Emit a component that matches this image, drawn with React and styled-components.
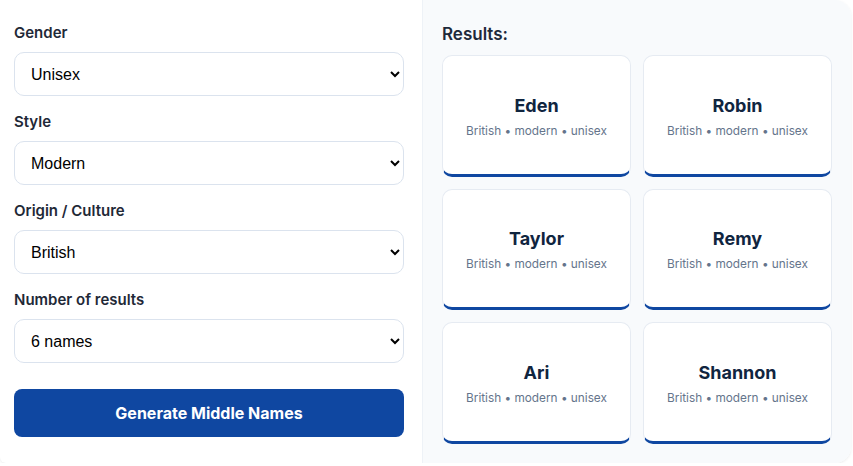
import React from "react";
import styled, { createGlobalStyle } from "styled-components";

const GlobalStyle = createGlobalStyle`
  body {
    margin: 0;
    background: #ffffff;
    font-family: Inter, "Noto Sans", sans-serif;
  }
`;

const Card = styled.div`
  display: grid;
  grid-template-columns: 422px 1fr;
  width: 851px;
  height: 463px;
  background: #ffffff;
  border-radius: 0 16px 16px 6px;
  box-shadow: 0 1px 3px rgba(15, 23, 42, 0.08);
  overflow: hidden;
`;

const Form = styled.div`
  display: flex;
  flex-direction: column;
  padding: 23px 18px 0 14px;
`;

const Field = styled.div`
  display: flex;
  flex-direction: column;
  gap: 9px;
  margin-bottom: 16px;
`;

const Label = styled.label`
  font-size: 15px;
  line-height: 20px;
  font-weight: 600;
  color: #1f2937;
`;

const Select = styled.select`
  height: 44px;
  padding: 0 8px 0 12px;
  font-family: "Liberation Sans", Arial, sans-serif;
  font-size: 16px;
  color: #000000;
  background: #ffffff;
  border: 1px solid #dbe3ee;
  border-radius: 10px;
  outline: none;
`;

const Button = styled.button`
  margin-top: 10px;
  height: 48px;
  border: none;
  border-radius: 8px;
  background: #0f47a1;
  color: #ffffff;
  font-family: Inter, "Noto Sans", sans-serif;
  font-size: 16px;
  font-weight: 700;
  cursor: pointer;
`;

const Results = styled.div`
  display: flex;
  flex-direction: column;
  background: #f8fafc;
  border-left: 1px solid #eef2f7;
  padding: 22px 19px 19px 19px;
`;

const Heading = styled.h2`
  margin: 0 0 9px 0;
  font-size: 17px;
  line-height: 24px;
  font-weight: 600;
  color: #1e293b;
`;

const Grid = styled.div`
  flex: 1;
  display: grid;
  grid-template-columns: 1fr 1fr;
  grid-template-rows: repeat(3, 1fr);
  gap: 12px;
`;

const NameCard = styled.div`
  display: flex;
  flex-direction: column;
  align-items: center;
  justify-content: center;
  gap: 6px;
  padding-top: 2px;
  background: #ffffff;
  border: 1px solid #e6ebf2;
  border-bottom: 3px solid #0f47a1;
  border-radius: 10px;
`;

const Name = styled.div`
  font-size: 18px;
  line-height: 24px;
  font-weight: 700;
  color: #10253f;
`;

const Meta = styled.div`
  font-size: 11.8px;
  line-height: 14px;
  color: #64748b;
`;

const fields = [
  { label: "Gender", value: "Unisex", options: ["Boy", "Girl", "Unisex"] },
  { label: "Style", value: "Modern", options: ["Classic", "Modern", "Unique"] },
  { label: "Origin / Culture", value: "British", options: ["American", "British", "Irish"] },
  { label: "Number of results", value: "6 names", options: ["3 names", "6 names", "9 names"] },
];

const names = ["Eden", "Robin", "Taylor", "Remy", "Ari", "Shannon"];

const App = () => {
  return (
    <>
      <GlobalStyle />
      <Card>
        <Form>
          {fields.map((f) => (
            <Field key={f.label}>
              <Label>{f.label}</Label>
              <Select defaultValue={f.value}>
                {f.options.map((o) => (
                  <option key={o}>{o}</option>
                ))}
              </Select>
            </Field>
          ))}
          <Button>Generate Middle Names</Button>
        </Form>
        <Results>
          <Heading>Results:</Heading>
          <Grid>
            {names.map((n) => (
              <NameCard key={n}>
                <Name>{n}</Name>
                <Meta>British • modern • unisex</Meta>
              </NameCard>
            ))}
          </Grid>
        </Results>
      </Card>
    </>
  );
};

export default App;
